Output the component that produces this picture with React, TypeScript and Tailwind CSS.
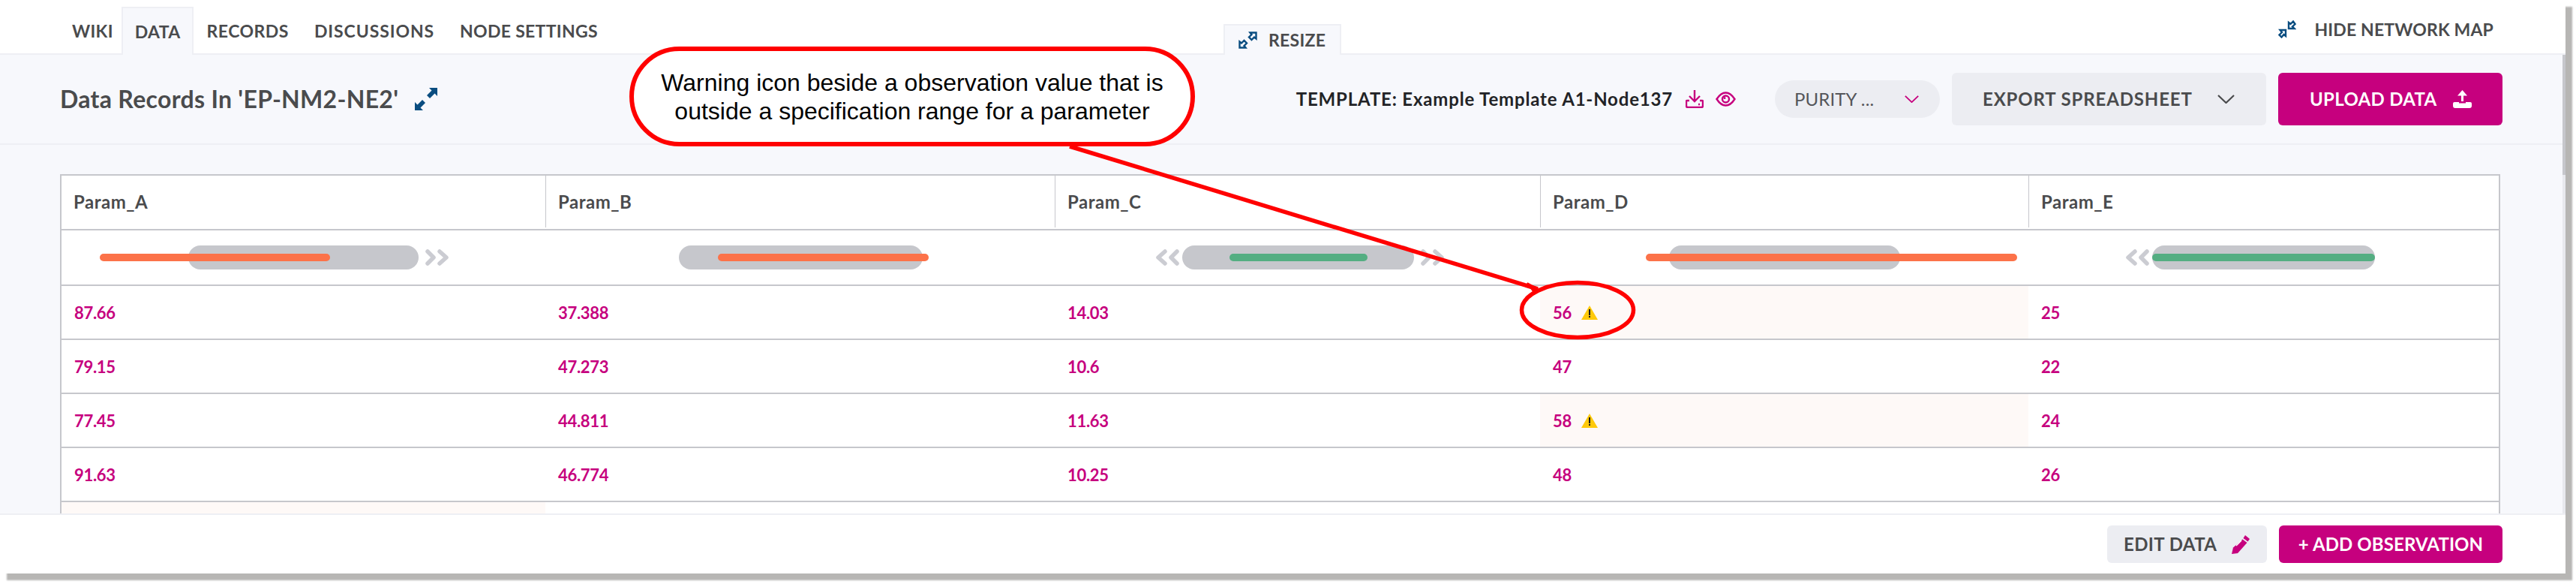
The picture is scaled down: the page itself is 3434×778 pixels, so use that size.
const font = "[font-family:Lato,'Liberation_Sans',sans-serif]";

type Slider = {
  pill: [number, number];
  bar: [number, number];
  color: string;
  left?: number;
  right?: number;
};

const columns = [
  { name: "Param_A", width: 645 },
  { name: "Param_B", width: 679 },
  { name: "Param_C", width: 647 },
  { name: "Param_D", width: 651 },
  { name: "Param_E", width: 627 },
];

const sliders: Slider[] = [
  { pill: [169, 307], bar: [51, 307], color: "#fc7249", right: 485 },
  { pill: [178, 325], bar: [230, 281], color: "#fc7249" },
  { pill: [170, 309], bar: [233, 184], color: "#54ae82", left: 134, right: 488 },
  { pill: [172, 308], bar: [141, 495], color: "#fc7249" },
  { pill: [165, 297], bar: [165, 297], color: "#54ae82", left: 129 },
];

const rows = [
  [{ v: "87.66" }, { v: "37.388" }, { v: "14.03" }, { v: "56", warn: true }, { v: "25" }],
  [{ v: "79.15" }, { v: "47.273" }, { v: "10.6" }, { v: "47" }, { v: "22" }],
  [{ v: "77.45" }, { v: "44.811" }, { v: "11.63" }, { v: "58", warn: true }, { v: "24" }],
  [{ v: "91.63" }, { v: "46.774" }, { v: "10.25" }, { v: "48" }, { v: "26" }],
];

function Chevrons({ dir, x }: { dir: "left" | "right"; x: number }) {
  return (
    <svg
      className="absolute top-[25px]"
      style={{ left: x }}
      width="32"
      height="22"
      viewBox="0 0 32 22"
      fill="none"
      stroke="#cbccd2"
      strokeWidth="5.5"
      strokeLinecap="round"
      strokeLinejoin="round"
    >
      {dir === "right" ? (
        <>
          <path d="M3 3 L11 11 L3 19" />
          <path d="M19 3 L28 11 L19 19" />
        </>
      ) : (
        <>
          <path d="M13 3 L4 11 L13 19" />
          <path d="M29 3 L21 11 L29 19" />
        </>
      )}
    </svg>
  );
}

function ArrowsOut({ className }: { className: string }) {
  return (
    <svg className={className} viewBox="0 0 25 23" fill="none" stroke="#0a4d80" strokeWidth="2.4">
      <path d="M15.5 1.5 H23.5 V9.5 L21 7.5 L17.5 11 L14 7.5 L17.5 4 Z" />
      <path d="M1.5 21.5 V13.5 L4 15.5 L7.5 12 L11 15.5 L7.5 19 L9.5 21.5 Z" />
    </svg>
  );
}

function ArrowsIn({ className }: { className: string }) {
  return (
    <svg className={className} viewBox="0 0 24 24" fill="none" stroke="#0a4d80" strokeWidth="2.4">
      <path d="M14 11 V3 L16.5 5 L20 1.5 L22.5 5 L19 8.5 L21.5 11 Z" />
      <path d="M10 13 V21 L7.5 19 L4.5 22.5 L1.5 19.5 L5 16 L2.5 13 Z" />
    </svg>
  );
}

function Warning() {
  return (
    <svg className="ml-[13px]" width="22" height="19" viewBox="0 0 22 19">
      <path d="M11 0 L22 19 H0 Z" fill="#ffc90b" />
      <rect x="10" y="5" width="2" height="8" fill="#1a1a1a" />
      <rect x="10" y="14" width="2" height="2" fill="#1a1a1a" />
    </svg>
  );
}

function Chevron({ color, className }: { color: string; className: string }) {
  return (
    <svg className={className} viewBox="0 0 23 12" fill="none" stroke={color} strokeWidth="2.2">
      <path d="M1 1 L11.5 11 L22 1" />
    </svg>
  );
}

export default function App() {
  return (
    <div className={`relative w-[3434px] h-[778px] overflow-hidden bg-white ${font}`}>
      <div className="flex flex-col w-[3420px] h-[764px] bg-white shadow-[9px_9px_2px_#b7b6b4]">
        {/* tabs */}
        <div className="flex h-[73px] pl-[79px] pr-[96px] border-b-2 border-[#eeeff4] text-[#4a4b4d] text-[23px] font-bold tracking-[0.3px]">
          <div className="flex items-center h-[64px] mt-[9px] pl-[17px] pr-[11px]">WIKI</div>
          <div className="flex items-center h-[64px] mt-[9px] px-[16px] border-2 border-b-0 border-[#eeeff4] bg-[#f7f8fc] z-10">
            DATA
          </div>
          <div className="flex items-center h-[64px] mt-[9px] px-[17px] tracking-[0.5px]">RECORDS</div>
          <div className="flex items-center h-[64px] mt-[9px] px-[17px] tracking-[0.9px]">DISCUSSIONS</div>
          <div className="flex items-center h-[64px] mt-[9px] px-[17px]">NODE SETTINGS</div>
          <div className="flex items-center gap-[15px] h-[41px] mt-[32px] ml-[817px] pl-[18px] pr-[19px] border-2 border-b-0 border-[#eeeff4] bg-[#f7f8fc]">
            <ArrowsOut className="w-[25px] h-[23px]" />
            RESIZE
          </div>
          <div className="flex items-center gap-[24px] h-[24px] mt-[27px] ml-auto tracking-[0.15px]">
            <ArrowsIn className="w-[24px] h-[24px]" />
            HIDE NETWORK MAP
          </div>
        </div>

        {/* middle */}
        <div className="flex flex-1 min-h-0">
          <div className="flex-1 min-w-0 flex flex-col bg-[#f7f8fc] overflow-hidden">
            <div className="flex items-center shrink-0 h-[120px] px-[80px] border-b-2 border-[#eeeff4]">
              <h1 className="text-[32px] font-bold tracking-[0.3px] text-[#4a4b4d]">Data Records In 'EP-NM2-NE2'</h1>
              <svg className="ml-[21px]" width="32" height="32" viewBox="0 0 32 32" fill="#0a4d80">
                <path d="M20 1 H31 V12 L27.5 8.5 L21 15 L17 11 L23.5 4.5 Z" />
                <path d="M1 31 V20 L4.5 23.5 L11 17 L15 21 L8.5 27.5 L12 31 Z" />
              </svg>
              <div className="ml-auto flex items-center">
                <span className="text-[24px] font-bold tracking-[0.82px] text-[#222326]">TEMPLATE: Example Template A1-Node137</span>
                <svg className="ml-[17px]" width="24" height="24" viewBox="0 0 24 24" fill="none" stroke="#c6007e" strokeWidth="2.4">
                  <path d="M12 0 V14 M5 8 L12 15 L19 8" />
                  <path d="M5 14 H2 Q1 14 1 15 V21 Q1 23 3 23 H21 Q23 23 23 21 V15 Q23 14 22 14 H19" />
                  <path d="M17 19 H19" />
                </svg>
                <svg className="ml-[16px]" width="27" height="20" viewBox="0 0 27 20" fill="none" stroke="#c6007e" strokeWidth="2.4">
                  <path d="M1.5 10 Q7 1.5 13.5 1.5 Q20 1.5 25.5 10 Q20 18.5 13.5 18.5 Q7 18.5 1.5 10 Z" />
                  <circle cx="13.5" cy="10" r="4.5" />
                  <circle cx="12" cy="8.5" r="1.5" fill="#c6007e" stroke="none" />
                </svg>
                <div className="flex items-center w-[220px] h-[50px] ml-[52px] pl-[26px] rounded-full bg-[#ecedf2] text-[24px] tracking-[0.1px] text-[#55565a]">
                  PURITY ...
                  <Chevron color="#c6007e" className="w-[19px] h-[10px] ml-[41px]" />
                </div>
                <div className="flex items-center w-[419px] h-[70px] ml-[16px] pl-[41px] rounded-md bg-[#ecedf2] text-[24px] font-bold tracking-[0.85px] text-[#4a4b4d]">
                  EXPORT SPREADSHEET
                  <Chevron color="#4a4b4d" className="w-[23px] h-[12px] ml-[33px]" />
                </div>
                <div className="flex items-center w-[299px] h-[70px] ml-[16px] pl-[42px] rounded-md bg-[#c6007e] text-[24px] font-bold tracking-[0.3px] text-white">
                  UPLOAD DATA
                  <svg className="ml-[21px]" width="25" height="24" viewBox="0 0 25 24" fill="#ffffff">
                    <path d="M12.5 0 L19 7.5 H14 V15 H11 V7.5 H6 Z" />
                    <path d="M2 16 H8 V17.5 H17 V16 H23 Q25 16 25 18 V21 Q25 24 22 24 H3 Q0 24 0 21 V18 Q0 16 2 16 Z" />
                  </svg>
                </div>
              </div>
            </div>

            {/* table */}
            <div className="flex-1 min-h-0 pt-[39px] pl-[80px]">
              <div className="w-[3253px] border-x-2 border-t-2 border-[#c6c7cc] bg-white">
                <div className="flex h-[73px] pb-[2px] border-b-2 border-[#c6c7cc]">
                  {columns.map((c, i) => (
                    <div
                      key={c.name}
                      style={{ width: c.width }}
                      className={`flex items-center pl-[16px] text-[24px] font-bold tracking-[0.5px] text-[#4a4b4d] ${i > 0 ? "border-l border-[#c6c7cc]" : ""}`}
                    >
                      {c.name}
                    </div>
                  ))}
                </div>
                <div className="flex h-[74px] border-b-2 border-[#c6c7cc]">
                  {sliders.map((s, i) => (
                    <div key={columns[i].name} style={{ width: columns[i].width }} className="relative">
                      {s.left !== undefined && <Chevrons dir="left" x={s.left} />}
                      <div
                        className="absolute top-[20px] h-[32px] rounded-full bg-[#c6c7cc]"
                        style={{ left: s.pill[0], width: s.pill[1] }}
                      />
                      <div
                        className="absolute top-[31px] h-[10px] rounded-full"
                        style={{ left: s.bar[0], width: s.bar[1], background: s.color }}
                      />
                      {s.right !== undefined && <Chevrons dir="right" x={s.right} />}
                    </div>
                  ))}
                </div>
                {rows.map((row, r) => (
                  <div key={r} className="flex h-[72px] border-b-2 border-[#c6c7cc]">
                    {row.map((cell, i) => (
                      <div
                        key={i}
                        style={{ width: columns[i].width }}
                        className={`flex items-center pl-[17px] text-[22px] font-bold tracking-[-0.3px] text-[#c6007e] ${cell.warn ? "bg-[#fef9f7]" : ""}`}
                      >
                        {cell.v}
                        {cell.warn && <Warning />}
                      </div>
                    ))}
                  </div>
                ))}
                <div className="h-[40px] w-[645px] bg-[#fef9f7]" />
              </div>
            </div>
          </div>
          <div className="flex flex-col w-[4px]">
            <div className="h-[160px] bg-[#c6c7cc]" />
            <div className="flex-1 bg-[#e8e9ee]" />
          </div>
        </div>

        {/* footer */}
        <div className="flex items-center justify-end gap-[16px] h-[80px] shrink-0 pr-[84px] border-t-2 border-[#eeeff4]">
          <div className="flex items-center w-[213px] h-[50px] pl-[22px] rounded-md bg-[#ecedf2] text-[24px] font-bold tracking-[0.4px] text-[#4a4b4d]">
            EDIT DATA
            <svg className="ml-[20px]" width="24" height="25" viewBox="0 0 24 25" fill="#c6007e">
              <path d="M18 0 L24 5 L21.5 8.5 L15.5 4 Z" />
              <path d="M14.5 5.5 L20.5 10 L8 24 L0 25 L2 16.5 Z" />
              <path d="M6 14 L13 7" stroke="#ffffff" strokeWidth="1.5" />
            </svg>
          </div>
          <div className="flex items-center justify-center w-[298px] h-[50px] rounded-md bg-[#c6007e] text-[24px] font-bold tracking-[0.1px] text-white">
            + ADD OBSERVATION
          </div>
        </div>
      </div>

      {/* annotation */}
      <svg className="absolute left-0 top-0 pointer-events-none" width="3434" height="778" fill="none" stroke="#ff0000">
        <path d="M1426 195 L2050 385" strokeWidth="5.5" />
        <path d="M2036 377 L2052 386 L2044 388 Z" fill="#ff0000" strokeWidth="2" />
        <ellipse cx="2103" cy="413" rx="74.5" ry="36.5" strokeWidth="5.5" />
      </svg>
      <div className="absolute left-[839px] top-[62px] flex items-center justify-center w-[754px] h-[133px] rounded-[70px] border-[6px] border-[#ff0000] bg-white text-center text-[32px] leading-[38px] text-black [font-family:'Liberation_Sans',sans-serif]">
        <p>
          Warning icon beside a observation value that is
          <br />
          outside a specification range for a parameter
        </p>
      </div>
    </div>
  );
}
